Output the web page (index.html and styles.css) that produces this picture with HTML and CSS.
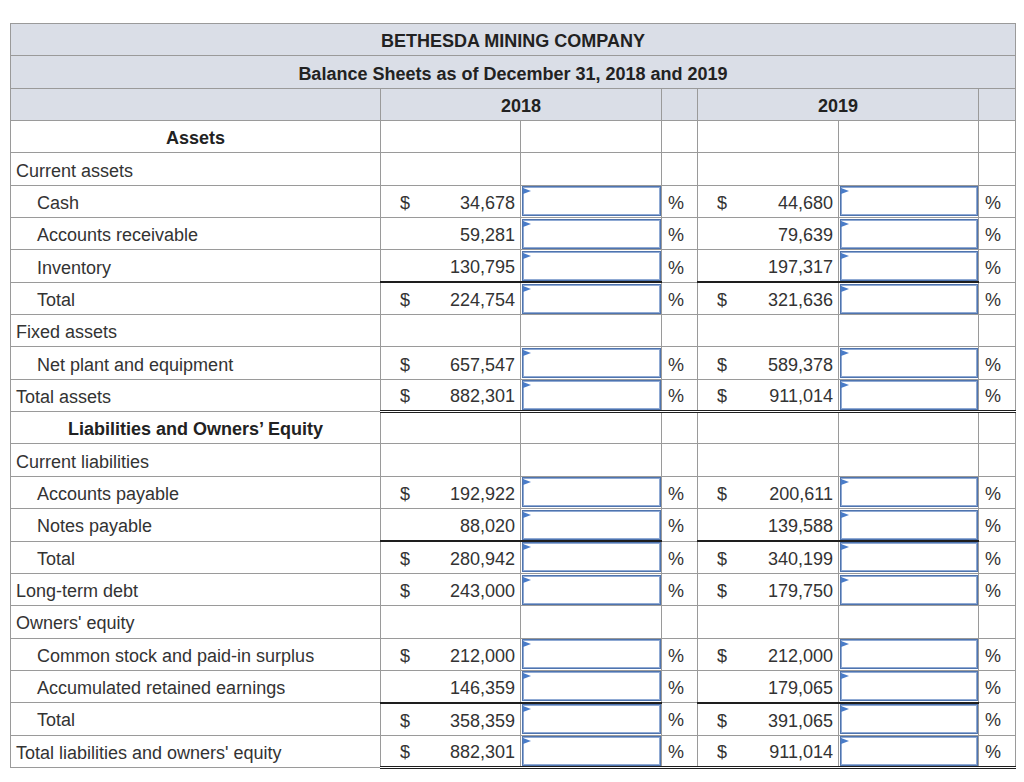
FILE: index.html
```html
<!DOCTYPE html>
<html>
<head>
<meta charset="utf-8">
<link rel="stylesheet" href="styles.css">
</head>
<body>
<table class="bs">
  <colgroup>
    <col class="c-label"><col class="c-val"><col class="c-inp"><col class="c-pct"><col class="c-val2"><col class="c-inp2"><col class="c-pct2">
  </colgroup>
  <tr class="hd"><th colspan="7">BETHESDA MINING COMPANY</th></tr>
  <tr class="hd"><th colspan="7">Balance Sheets as of December 31, 2018 and 2019</th></tr>
  <tr class="hd"><th></th><th colspan="2">2018</th><th></th><th colspan="2">2019</th><th></th></tr>

  <tr><td class="lbl sec">Assets</td><td></td><td></td><td></td><td></td><td></td><td></td></tr>
  <tr><td class="lbl">Current assets</td><td></td><td></td><td></td><td></td><td></td><td></td></tr>

  <tr><td class="lbl ind">Cash</td>
    <td class="val"><div class="amt"><span class="cur">$</span><span class="num">34,678</span></div></td>
    <td class="inp"><div class="box"></div></td><td class="pct">%</td>
    <td class="val"><div class="amt"><span class="cur">$</span><span class="num">44,680</span></div></td>
    <td class="inp"><div class="box"></div></td><td class="pct">%</td></tr>
  <tr><td class="lbl ind">Accounts receivable</td>
    <td class="val"><div class="amt"><span class="num">59,281</span></div></td>
    <td class="inp"><div class="box"></div></td><td class="pct">%</td>
    <td class="val"><div class="amt"><span class="num">79,639</span></div></td>
    <td class="inp"><div class="box"></div></td><td class="pct">%</td></tr>
  <tr><td class="lbl ind">Inventory</td>
    <td class="val"><div class="amt"><span class="num">130,795</span></div></td>
    <td class="inp"><div class="box"></div></td><td class="pct">%</td>
    <td class="val"><div class="amt"><span class="num">197,317</span></div></td>
    <td class="inp"><div class="box"></div></td><td class="pct">%</td></tr>
  <tr class="sub"><td class="lbl ind">Total</td>
    <td class="val"><div class="amt"><span class="cur">$</span><span class="num">224,754</span></div></td>
    <td class="inp"><div class="box"></div></td><td class="pct">%</td>
    <td class="val"><div class="amt"><span class="cur">$</span><span class="num">321,636</span></div></td>
    <td class="inp"><div class="box"></div></td><td class="pct">%</td></tr>

  <tr><td class="lbl">Fixed assets</td><td></td><td></td><td></td><td></td><td></td><td></td></tr>
  <tr><td class="lbl ind">Net plant and equipment</td>
    <td class="val"><div class="amt"><span class="cur">$</span><span class="num">657,547</span></div></td>
    <td class="inp"><div class="box"></div></td><td class="pct">%</td>
    <td class="val"><div class="amt"><span class="cur">$</span><span class="num">589,378</span></div></td>
    <td class="inp"><div class="box"></div></td><td class="pct">%</td></tr>
  <tr class="grand"><td class="lbl">Total assets</td>
    <td class="val"><div class="amt"><span class="cur">$</span><span class="num">882,301</span></div></td>
    <td class="inp"><div class="box"></div></td><td class="pct">%</td>
    <td class="val"><div class="amt"><span class="cur">$</span><span class="num">911,014</span></div></td>
    <td class="inp"><div class="box"></div></td><td class="pct">%</td></tr>

  <tr><td class="lbl sec">Liabilities and Owners’ Equity</td><td></td><td></td><td></td><td></td><td></td><td></td></tr>
  <tr><td class="lbl">Current liabilities</td><td></td><td></td><td></td><td></td><td></td><td></td></tr>
  <tr><td class="lbl ind">Accounts payable</td>
    <td class="val"><div class="amt"><span class="cur">$</span><span class="num">192,922</span></div></td>
    <td class="inp"><div class="box"></div></td><td class="pct">%</td>
    <td class="val"><div class="amt"><span class="cur">$</span><span class="num">200,611</span></div></td>
    <td class="inp"><div class="box"></div></td><td class="pct">%</td></tr>
  <tr><td class="lbl ind">Notes payable</td>
    <td class="val"><div class="amt"><span class="num">88,020</span></div></td>
    <td class="inp"><div class="box"></div></td><td class="pct">%</td>
    <td class="val"><div class="amt"><span class="num">139,588</span></div></td>
    <td class="inp"><div class="box"></div></td><td class="pct">%</td></tr>
  <tr class="sub"><td class="lbl ind">Total</td>
    <td class="val"><div class="amt"><span class="cur">$</span><span class="num">280,942</span></div></td>
    <td class="inp"><div class="box"></div></td><td class="pct">%</td>
    <td class="val"><div class="amt"><span class="cur">$</span><span class="num">340,199</span></div></td>
    <td class="inp"><div class="box"></div></td><td class="pct">%</td></tr>
  <tr><td class="lbl">Long-term debt</td>
    <td class="val"><div class="amt"><span class="cur">$</span><span class="num">243,000</span></div></td>
    <td class="inp"><div class="box"></div></td><td class="pct">%</td>
    <td class="val"><div class="amt"><span class="cur">$</span><span class="num">179,750</span></div></td>
    <td class="inp"><div class="box"></div></td><td class="pct">%</td></tr>
  <tr><td class="lbl">Owners' equity</td><td></td><td></td><td></td><td></td><td></td><td></td></tr>
  <tr><td class="lbl ind">Common stock and paid-in surplus</td>
    <td class="val"><div class="amt"><span class="cur">$</span><span class="num">212,000</span></div></td>
    <td class="inp"><div class="box"></div></td><td class="pct">%</td>
    <td class="val"><div class="amt"><span class="cur">$</span><span class="num">212,000</span></div></td>
    <td class="inp"><div class="box"></div></td><td class="pct">%</td></tr>
  <tr><td class="lbl ind">Accumulated retained earnings</td>
    <td class="val"><div class="amt"><span class="num">146,359</span></div></td>
    <td class="inp"><div class="box"></div></td><td class="pct">%</td>
    <td class="val"><div class="amt"><span class="num">179,065</span></div></td>
    <td class="inp"><div class="box"></div></td><td class="pct">%</td></tr>
  <tr class="sub"><td class="lbl ind">Total</td>
    <td class="val"><div class="amt"><span class="cur">$</span><span class="num">358,359</span></div></td>
    <td class="inp"><div class="box"></div></td><td class="pct">%</td>
    <td class="val"><div class="amt"><span class="cur">$</span><span class="num">391,065</span></div></td>
    <td class="inp"><div class="box"></div></td><td class="pct">%</td></tr>
  <tr class="grand"><td class="lbl">Total liabilities and owners' equity</td>
    <td class="val"><div class="amt"><span class="cur">$</span><span class="num">882,301</span></div></td>
    <td class="inp"><div class="box"></div></td><td class="pct">%</td>
    <td class="val"><div class="amt"><span class="cur">$</span><span class="num">911,014</span></div></td>
    <td class="inp"><div class="box"></div></td><td class="pct">%</td></tr>
</table>
</body>
</html>
```

FILE: styles.css
```css
html, body {
  margin: 0;
  padding: 0;
  background: #ffffff;
}

body {
  padding: 23px 0 0 10px;
  font-family: "Liberation Sans", Arial, Helvetica, sans-serif;
  font-size: 18px;
  color: #333333;
}

.bs {
  border-collapse: collapse;
  table-layout: fixed;
  width: 1005px;
}

.c-label { width: 370px; }
.c-val { width: 140px; }
.c-inp { width: 141px; }
.c-pct { width: 36px; }
.c-val2 { width: 141px; }
.c-inp2 { width: 140px; }
.c-pct2 { width: 37px; }

.bs tr {
  height: 32.35px;
}

.bs th,
.bs td {
  border: 1px solid #9a9a9a;
  padding: 3px 0 0 0;
  vertical-align: middle;
  line-height: 20px;
}

.hd th {
  background: #dadee7;
  color: #222222;
  font-weight: bold;
  text-align: center;
}

.lbl {
  padding-left: 5px !important;
  text-align: left;
  white-space: nowrap;
}

.lbl.ind {
  padding-left: 26px !important;
}

.lbl.sec {
  padding-left: 0 !important;
  text-align: center;
  font-weight: bold;
  color: #222222;
}

.amt {
  display: flex;
  align-items: center;
  padding: 0 5px 0 19px;
}

.num {
  margin-left: auto;
}

.pct {
  padding-left: 6px !important;
}

.bs td.inp {
  padding: 0;
}

.box {
  position: relative;
  box-sizing: border-box;
  height: 30px;
  margin: 0 0 0 1px;
  border: 1px solid #4f74ae;
  box-shadow: inset 0 0 0 1px #8fa9d3;
  background: #ffffff;
}

.box::before {
  content: "";
  position: absolute;
  left: 0;
  top: 1px;
  width: 0;
  height: 0;
  border-left: 8px solid #4a7cc8;
  border-top: 3.5px solid transparent;
  border-bottom: 3.5px solid transparent;
}

.sub .val,
.sub .inp {
  border-top: 2px solid #1e1e1e;
}

.grand td:not(.lbl) {
  border-bottom: 3px double #1e1e1e;
}
```
